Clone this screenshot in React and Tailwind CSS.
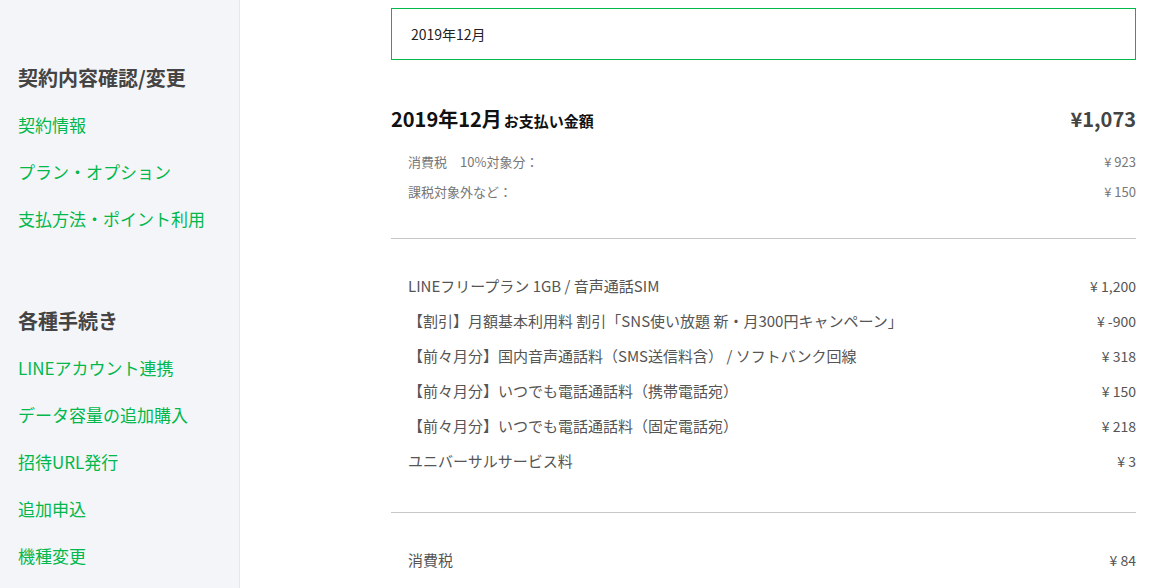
const FONT = { fontFamily: '"Noto Sans CJK JP", "Noto Sans", sans-serif' };

const SIDE_SECTIONS = [
    {
        title: '契約内容確認/変更',
        links: ['契約情報', 'プラン・オプション', '支払方法・ポイント利用'],
    },
    {
        title: '各種手続き',
        links: ['LINEアカウント連携', 'データ容量の追加購入', '招待URL発行', '追加申込', '機種変更'],
    },
];

const ITEMS = [
    { label: 'LINEフリープラン 1GB / 音声通話SIM', amount: '¥ 1,200' },
    { label: '【割引】月額基本利用料 割引「SNS使い放題 新・月300円キャンペーン」', amount: '¥ -900' },
    { label: '【前々月分】国内音声通話料（SMS送信料含） / ソフトバンク回線', amount: '¥ 318' },
    { label: '【前々月分】いつでも電話通話料（携帯電話宛）', amount: '¥ 150' },
    { label: '【前々月分】いつでも電話通話料（固定電話宛）', amount: '¥ 218' },
    { label: 'ユニバーサルサービス料', amount: '¥ 3' },
];

const Sidebar = () => (
    <aside className="w-[240px] shrink-0 h-full bg-[#f4f5f8] border-r border-[#e6e7eb] pt-[54px] pl-[18px]">
        {SIDE_SECTIONS.map((section, i) => (
            <div key={section.title} className={i > 0 ? 'mt-[55px]' : ''}>
                <div className="h-[47px] flex items-center text-[20px] font-bold text-[#444]">
                    {section.title}
                </div>
                {section.links.map((link) => (
                    <a
                        key={link}
                        href="#"
                        className="h-[47px] flex items-center text-[17px] text-[#00b84c]"
                    >
                        {link}
                    </a>
                ))}
            </div>
        ))}
    </aside>
);

const App = () => {
    return (
        <div className="flex w-full h-screen overflow-hidden bg-white" style={FONT}>
            <Sidebar />
            <main className="flex-1 pl-[151px] pr-[17px]">
                <div className="mt-[8px] h-[52px] border border-[#00b84c] pl-[19px] flex items-center text-[14px] text-[#222]">
                    2019年12月
                </div>

                <div className="mt-[44px] h-[30px] flex items-center justify-between">
                    <div className="flex items-baseline font-bold text-[#111]">
                        <span className="text-[20px]">2019年12月</span>
                        <span className="text-[15px] ml-[2px]">お支払い金額</span>
                    </div>
                    <span className="text-[20px] font-bold text-[#444]">¥1,073</span>
                </div>

                <div className="mt-[13px] pl-[17px] text-[13px] text-[#777]">
                    <div className="h-[30px] flex items-center justify-between">
                        <span>消費税　10%対象分：</span>
                        <span>¥ 923</span>
                    </div>
                    <div className="h-[30px] flex items-center justify-between">
                        <span>課税対象外など：</span>
                        <span>¥ 150</span>
                    </div>
                </div>

                <div className="mt-[31px] border-t border-[#c8c8c8]" />

                <div className="mt-[30px] pl-[17px] text-[15px] text-[#555]">
                    {ITEMS.map((item) => (
                        <div key={item.label} className="h-[35px] flex items-center justify-between">
                            <span>{item.label}</span>
                            <span className="text-[14px]">{item.amount}</span>
                        </div>
                    ))}
                </div>

                <div className="mt-[33px] border-t border-[#c8c8c8]" />

                <div className="mt-[30px] pl-[17px] h-[35px] flex items-center justify-between text-[15px] text-[#555]">
                    <span>消費税</span>
                    <span className="text-[14px]">¥ 84</span>
                </div>
            </main>
        </div>
    );
};

export default App;
